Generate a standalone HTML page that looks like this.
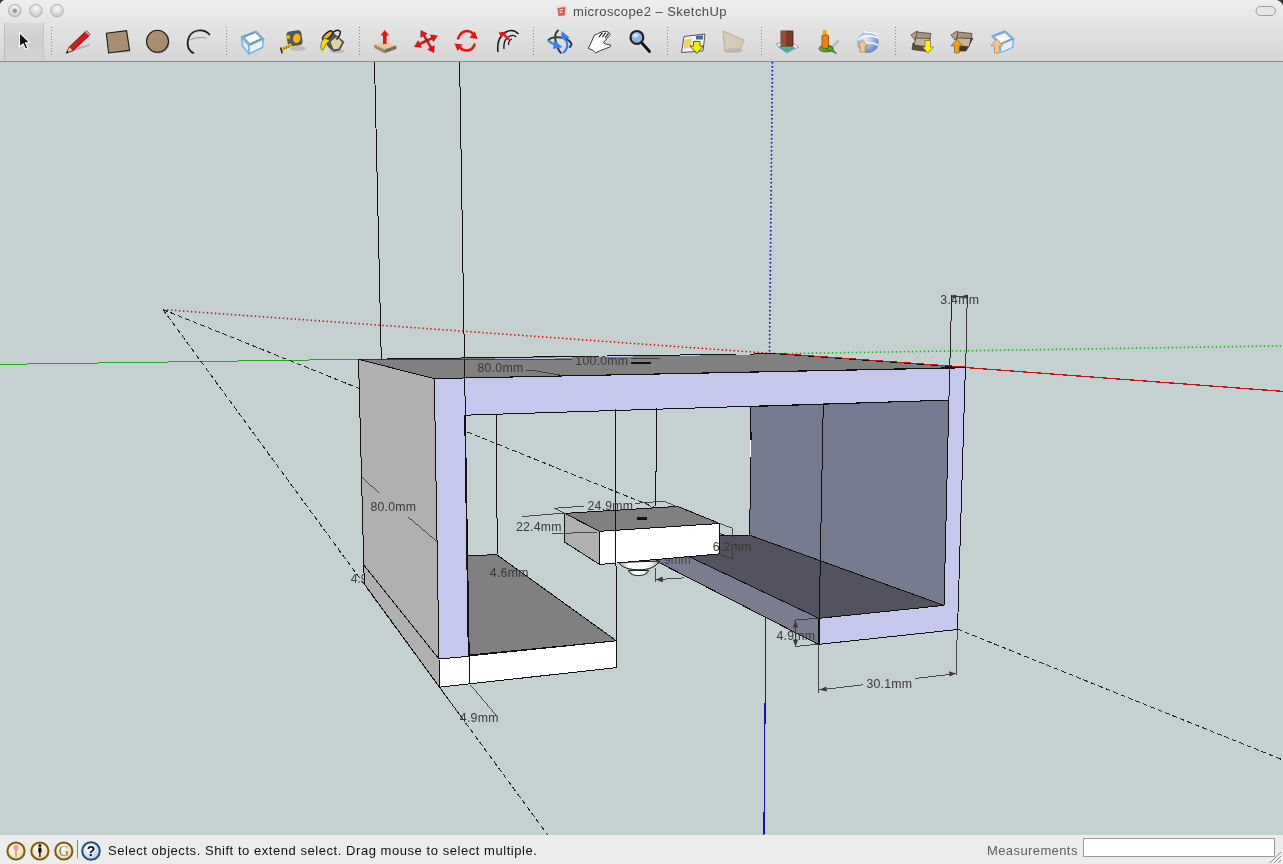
<!DOCTYPE html>
<html><head><meta charset="utf-8">
<style>
html,body{margin:0;padding:0;width:1283px;height:864px;overflow:hidden;background:#c5d0d1;font-family:"Liberation Sans",sans-serif;}
#top{position:absolute;left:0;top:0;width:1283px;height:61px;background:linear-gradient(#eeeeee,#e4e4e4 40%,#d5d5d5);border-bottom:1px solid #8e8e8e;will-change:transform;}
#status{position:absolute;left:0;top:835px;width:1283px;height:29px;background:#ececec;will-change:transform;}
#title{position:absolute;left:573px;top:4px;font-size:13px;letter-spacing:0.43px;color:#4b4b4b;white-space:nowrap;}
#vp{position:absolute;left:0;top:0;will-change:transform;}
.st{position:absolute;font-size:13px;color:#111;white-space:nowrap;letter-spacing:0.55px;}
</style></head><body>
<svg id="vp" width="1283" height="864" viewBox="0 0 1283 864" shape-rendering="crispEdges">
<defs>
 <linearGradient id="cyl" x1="0" y1="0" x2="1" y2="0"><stop offset="0" stop-color="#9a9a9a"/><stop offset="0.25" stop-color="#ffffff"/><stop offset="0.75" stop-color="#ffffff"/><stop offset="1" stop-color="#9a9a9a"/></linearGradient>
</defs>
<g id="axes" fill="none">
 <line x1="0" y1="364.4" x2="358.5" y2="359.3" stroke="#1faa1f" stroke-width="1"/>
 <line x1="163" y1="309.6" x2="775.8" y2="353.7" stroke="#d01010" stroke-width="1.6" stroke-dasharray="1.4 2.6" shape-rendering="auto"/>
 <line x1="775.8" y1="353.7" x2="1283" y2="345.9" stroke="#20b020" stroke-width="1.6" stroke-dasharray="1.4 2.6" shape-rendering="auto"/>
 <line x1="772.4" y1="62" x2="769.5" y2="353.7" stroke="#0000c8" stroke-width="1.6" stroke-dasharray="1.4 2.6" shape-rendering="auto"/>
 <line x1="965.4" y1="367.5" x2="1283" y2="391.4" stroke="#c01818" stroke-width="1.3"/>
 <line x1="765.9" y1="618" x2="763.9" y2="835" stroke="#1010c8" stroke-width="1.2"/>
</g>
<g id="guides" fill="none" stroke="#222" stroke-width="1">
 <line x1="163" y1="309.6" x2="547.7" y2="835" stroke-dasharray="5 3"/>
 <line x1="163" y1="309.6" x2="1283" y2="760" stroke-dasharray="5 3"/>
</g>
<g font-family="Liberation Sans" font-size="12" fill="#454545">
 <text x="350.8" y="582.6">4.9mm</text>
</g>
<g id="faces" stroke="#111" stroke-width="1" stroke-linejoin="round">
 <polygon points="750.1,406.6 948.9,400.1 944,605.4 750,535.6" fill="#767b90"/>
 <polygon points="656,535.8 749,535 944,605.4 819,618.3 656,541" fill="#52535f"/>
 <polygon points="656,541 819,618.3 818.5,644.5 656,561" fill="#7b7c90"/>
 <polygon points="467.6,556 496.5,554.5 616.4,640.8 467.6,655.2" fill="#808080"/>
 <polygon points="439,659 616.4,640.8 616.4,667.6 439.5,687.2" fill="#ffffff"/>
 <polygon points="358.5,359.4 434.3,378.6 439,659 363.8,565" fill="#b0b0b0"/>
 <polygon points="363.8,565 439,659 439.5,687.2 364.3,584" fill="#b0b0b0"/>
 <polygon points="358.5,359.4 775.8,353.7 965.4,367.5 434.3,378.6" fill="#808080"/>
 <path d="M434.3,378.6 L965.4,367.8 L957.5,629.5 L819,644.3 L819,618.3 L944,605.4 L948.9,400.1 L464.7,415.2 L468.3,656.3 L439,659 Z" fill="#c5c8ec"/>
</g>
<g id="zfight" stroke="#c5c8ec" stroke-width="1">
 <line x1="495" y1="359" x2="531" y2="358.6"/>
 <line x1="531" y1="358.3" x2="572" y2="357.8"/>
 <line x1="599" y1="356.9" x2="633" y2="356.5"/>
 <line x1="680" y1="356" x2="700" y2="355.7"/>
 <line x1="736" y1="355" x2="750" y2="354.8"/>
</g>
<line x1="775.8" y1="353.2" x2="965.4" y2="367" stroke="#c01818" stroke-width="1"/>
<g id="edges" fill="none" stroke="#111" stroke-width="1">
 <line x1="374.5" y1="62" x2="381.3" y2="359"/>
 <line x1="459.6" y1="62" x2="469.7" y2="684"/>
 <line x1="496.5" y1="415" x2="497.2" y2="554.5"/>
 <line x1="656.6" y1="408.5" x2="655.7" y2="506.5"/>
 <line x1="823.3" y1="403.3" x2="819.2" y2="618.3"/>
 <line x1="951.7" y1="295.4" x2="948.9" y2="400.1" stroke="#222"/>
 <line x1="967.3" y1="294.9" x2="965.7" y2="367.5" stroke="#333"/>
</g>
<rect x="749.5" y="432" width="2" height="8" fill="#111"/>
<rect x="750" y="440" width="1.2" height="16.5" fill="#fff"/>
<g font-family="Liberation Sans" font-size="12" fill="#454545">
 <text x="654" y="564.3">3.9mm</text>
</g>
<g id="box" stroke="#111" stroke-width="1" stroke-linejoin="round">
 <path shape-rendering="auto" d="M628.4,570.4 C629.5,574 634,575.6 638.5,575.6 C643,575.6 647.5,574 648.6,570.4 Z" fill="url(#cyl)"/>
 <path shape-rendering="auto" d="M619,562.5 C621,567.5 630,569.8 639,569.8 C648,569.8 657,567 659,561 Z" fill="url(#cyl)"/>
 <polygon points="564.8,513.4 599.6,531.3 599.6,564.5 564.8,542.2" fill="#b0b0b0"/>
 <polygon points="564.8,513.4 677.8,506.4 719.6,523.5 599.6,531.3" fill="#808080"/>
 <polygon points="599.6,531.3 719.6,523.5 719.6,553.9 599.6,564.5" fill="#ffffff"/>
 <rect x="637.3" y="517.3" width="9.3" height="2.7" fill="#111" stroke="none"/>
 <line x1="615.4" y1="409.5" x2="616.4" y2="667.6" stroke-width="1"/>
</g>
<g id="dims" fill="none" stroke="#3a3a3a" stroke-width="0.9">
 <line x1="361.8" y1="477.2" x2="379.1" y2="493"/>
 <line x1="408.1" y1="517" x2="436.6" y2="541.2"/>
 <line x1="521.7" y1="516.6" x2="564.5" y2="513.1"/>
 <line x1="555.2" y1="508.5" x2="564.5" y2="513.1"/>
 <line x1="551.7" y1="533.7" x2="596.9" y2="532.2"/>
 <line x1="554" y1="508.3" x2="583.6" y2="506.2"/>
 <polyline points="635.2,503.4 664.2,501.2 677.3,506.8"/>
 <line x1="646.4" y1="504" x2="652" y2="507.3"/>
 <polyline points="719.5,523.9 732.6,528.6 732.6,536.5"/>
 <polyline points="719.5,554.8 732.6,559.4 732.6,552.4"/>
 <line x1="655.4" y1="568.3" x2="655.4" y2="582.4"/>
 <line x1="655.4" y1="579.7" x2="684" y2="577.9"/>
 <polyline points="794,620.2 819,618"/>
 <polyline points="795,646.6 819,644"/>
 <line x1="795.5" y1="621" x2="795.5" y2="646"/>
 <line x1="818.6" y1="644.5" x2="818.6" y2="692.6"/>
 <line x1="957.2" y1="629.5" x2="956.3" y2="675.4"/>
 <line x1="819" y1="690" x2="862.9" y2="684.8"/>
 <line x1="915.2" y1="678.5" x2="955.5" y2="673.7"/>
 <line x1="470.5" y1="685" x2="495.6" y2="714.6"/>
 <line x1="439.5" y1="687.2" x2="461.5" y2="717.2" stroke="#111"/>
 <line x1="526.3" y1="370.2" x2="533.7" y2="370.5"/>
 <line x1="533.7" y1="370.5" x2="561.8" y2="375.4"/>
 <line x1="362" y1="359.8" x2="572.2" y2="359.1"/>
 <line x1="630.7" y1="359" x2="660" y2="358.3"/>
 <line x1="630.7" y1="363" x2="650.7" y2="363" stroke-width="1.6" stroke="#111"/>
 <line x1="952" y1="296.5" x2="967" y2="296.5" stroke-width="1"/>
</g>
<g id="dimarrows" fill="#3a3a3a" shape-rendering="auto">
 <polygon points="819.3,689.8 826.3,686.4 826.9,691.6"/>
 <polygon points="956,673.6 949,671.2 949.6,676.4"/>
 <polygon points="795.5,620.3 792.8,627.5 798.2,627.5"/>
 <polygon points="795.5,646.8 792.8,639.6 798.2,639.6"/>
 <polygon points="655.8,579.7 662.5,576.6 662.9,582.2"/>
 <polygon points="958.5,296.5 952.5,294.5 952.5,298.5"/>
 <polygon points="961,296.5 967,294.5 967,298.5"/>
</g>
<g id="labels" font-family="Liberation Sans" font-size="12.3" fill="#383838" letter-spacing="0.25">
 <text x="370.4" y="510.7">80.0mm</text>
 <text x="489.8" y="576.8">4.6mm</text>
 <text x="515.9" y="531.1">22.4mm</text>
 <text x="587.4" y="510.4">24.9mm</text>
 <text x="712.8" y="550.5">6.2mm</text>
 <text x="776.5" y="640.3">4.9mm</text>
 <text x="866.4" y="688.3">30.1mm</text>
 <text x="459.8" y="721.5">4.9mm</text>
 <text x="940.3" y="303.8">3.4mm</text>
 <text x="477.5" y="371.7">80.0mm</text>
 <text x="575.3" y="364.7">100.0mm</text>
</g>
</svg>
<div id="top">
<div id="title">microscope2 – SketchUp</div>
<svg id="tb" width="1283" height="62" viewBox="0 0 1283 62" style="position:absolute;left:0;top:0">
<defs>
 <radialGradient id="tl" cx="50%" cy="35%" r="60%"><stop offset="0" stop-color="#fafafa"/><stop offset="1" stop-color="#c9c9c9"/></radialGradient>
 <linearGradient id="selb" x1="0" y1="0" x2="0" y2="1"><stop offset="0" stop-color="#d9d9d9"/><stop offset="0.5" stop-color="#cdcdcd"/><stop offset="1" stop-color="#d4d4d4"/></linearGradient>
 <radialGradient id="globe" cx="40%" cy="35%" r="65%"><stop offset="0" stop-color="#e8eefa"/><stop offset="1" stop-color="#6d86c4"/></radialGradient>
</defs>
<path d="M0,0 L4,0 Q1,1 0,4 Z" fill="#333"/>
<path d="M1283,0 L1277,0 Q1282,1.5 1283,6 Z" fill="#333"/>
<!-- traffic lights -->
<circle cx="14.8" cy="10.6" r="6.3" fill="url(#tl)" stroke="#a9a9a9" stroke-width="0.8"/>
<circle cx="14.8" cy="10.8" r="2.2" fill="#9a9a9a"/>
<circle cx="35.9" cy="10.6" r="6.3" fill="url(#tl)" stroke="#a9a9a9" stroke-width="0.8"/>
<circle cx="57" cy="10.6" r="6.3" fill="url(#tl)" stroke="#a9a9a9" stroke-width="0.8"/>
<!-- zoom pill right -->
<rect x="1256" y="6.5" width="19.5" height="9" rx="4.5" fill="#e6e6e6" stroke="#8a8a8a" stroke-width="0.8"/>
<!-- title icon -->
<rect x="556" y="5.5" width="11" height="11.5" fill="#e4e4e4"/>
<path d="M557.5,8 L565.5,7 L564.5,15.5 L558.5,16 Z" fill="#d9574f"/>
<path d="M559.5,10 L563,9.7 M559.5,12.5 L562.5,12.2" stroke="#fff" stroke-width="1"/>
<!-- selected tool button -->
<rect x="4.5" y="23" width="39" height="37.5" fill="url(#selb)"/>
<line x1="4.5" y1="23" x2="4.5" y2="60.5" stroke="#bcbcbc"/>
<line x1="43.5" y1="23" x2="43.5" y2="60.5" stroke="#c4c4c4"/>
<path d="M19.5,32.5 L19.5,47 L23,43.8 L25.6,49.3 L28,48.2 L25.4,42.8 L29.8,42.6 Z" fill="#111" stroke="#fff" stroke-width="1.1" stroke-linejoin="round"/>
<!-- separators -->
<g stroke="#8a8a8a" stroke-width="1" stroke-dasharray="1.2 1.8" shape-rendering="crispEdges">
<line x1="51.5" y1="26.5" x2="51.5" y2="57"/>
<line x1="226" y1="26.5" x2="226" y2="57"/>
<line x1="359.5" y1="26.5" x2="359.5" y2="57"/>
<line x1="533.5" y1="26.5" x2="533.5" y2="57"/>
<line x1="667.5" y1="26.5" x2="667.5" y2="57"/>
<line x1="761.5" y1="26.5" x2="761.5" y2="57"/>
<line x1="895.5" y1="26.5" x2="895.5" y2="57"/>
</g>
<!-- pencil -->
<path d="M68,51 L87,34" stroke="#9a9a9a" stroke-width="1.5" opacity="0.0"/>
<path d="M70,51.5 L89,45" stroke="#a0a0a0" stroke-width="1.6" stroke-linecap="round" opacity="0.8"/>
<path d="M66.2,53.2 L69.5,46.8 L84.8,32.2 L88.8,36 L73.2,50.5 Z" fill="#e01515" stroke="#3a0000" stroke-width="0.7"/>
<path d="M66.2,53.2 L69.5,46.8 L72.8,50.4 Z" fill="#e8d59a" stroke="#333" stroke-width="0.6"/>
<path d="M66.2,53.2 L67.4,50.8 L68.6,52.1 Z" fill="#111"/>
<path d="M84.8,32.2 L86.6,30.5 L90.4,34.3 L88.8,36 Z" fill="#f080b0" stroke="#555" stroke-width="0.6"/>
<!-- rectangle -->
<path d="M108.2,52.5 L130,51.3" stroke="#9a9a9a" stroke-width="1.5" opacity="0.7"/>
<polygon points="106.3,33.3 126.6,30.7 129.6,50.3 108.6,53" fill="#a88e6e" stroke="#1b1b1b" stroke-width="1.1"/>
<!-- circle -->
<circle cx="158.5" cy="42.5" r="11.2" fill="#9a9a9a" opacity="0.5"/>
<circle cx="157.5" cy="41.3" r="11" fill="#a88e6e" stroke="#1b1b1b" stroke-width="1.1"/>
<!-- arc -->
<path d="M209.5,34.5 C204,28.5 193,29 189,37 C186,44 188,50.5 193.3,53" fill="none" stroke="#1b1b1b" stroke-width="1.7" stroke-linecap="round"/>
<path d="M190,40 C194,37.5 200,37 206.5,38" fill="none" stroke="#888" stroke-width="0.8"/>
<!-- make component -->
<g stroke-linejoin="round">
<polygon points="241.5,37 256,31.3 263.5,39 249,45.5" fill="#f4f4f4" stroke="#66b0f0" stroke-width="1.6"/>
<polygon points="241.5,37 249,45.5 249,53.8 242.5,46" fill="#e8e8e8" stroke="#66b0f0" stroke-width="1.4"/>
<polygon points="249,45.5 263.5,39 262.5,47.5 249,53.8" fill="#f0f0f0" stroke="#66b0f0" stroke-width="1.4"/>
<polygon points="243.8,37 255.5,32.6 261.3,38.6 249.6,43.8" fill="#fafafa" stroke="#555" stroke-width="0.8"/>
</g>
<!-- tape measure -->
<ellipse cx="298" cy="48.5" rx="8" ry="2.6" fill="#9a9a9a" opacity="0.45"/>
<rect x="287" y="30.8" width="15" height="15" rx="3.5" fill="#565656" transform="rotate(-8 294.5 38.3)"/>
<circle cx="288.3" cy="37" r="2.1" fill="#f2b400"/>
<ellipse cx="296.8" cy="38.3" rx="3.7" ry="4.8" fill="#f6b800" transform="rotate(15 296.8 38.3)"/>
<path d="M281,49.6 L291.5,44.8" stroke="#f2c000" stroke-width="3.2"/>
<path d="M283.5,50 L284.5,47.5 M286,49 L287,46.4 M288.5,47.8 L289.5,45.3" stroke="#333" stroke-width="0.7"/>
<path d="M280.6,47.5 L282.2,53.4" stroke="#222" stroke-width="1.5"/>
<!-- paint bucket -->
<ellipse cx="337" cy="51" rx="7.5" ry="2.2" fill="#9a9a9a" opacity="0.45"/>
<polygon points="323.5,39 331.5,31.5 344,42 339.5,50 334,51.2 329,47.5" fill="#565656" stroke="#2a2a2a" stroke-width="0.6"/>
<polygon points="330.5,41.8 337,36.8 342,42.5 338.5,48.8 333.5,49.3" fill="#dcd3a6"/>
<ellipse cx="327.6" cy="35.5" rx="6.2" ry="2.6" fill="#f0b000" stroke="#1a1a1a" stroke-width="1.4" transform="rotate(-42 327.6 35.5)"/>
<path d="M333,32.5 Q337.5,28.5 340.3,31.5 Q340.5,35.5 336.5,39.5" fill="none" stroke="#111" stroke-width="1.3"/>
<path d="M324.5,38 Q320,42.5 320.8,48 Q321.8,51.5 323.4,49.5 Q324.5,44.5 330,40.5 Z" fill="#f2e000" stroke="#333" stroke-width="0.6"/>
<ellipse cx="322.6" cy="52.3" rx="0.9" ry="1.1" fill="#f2e000"/>
<!-- push pull -->
<polygon points="374,44.5 386,41.8 396.3,45.5 384.5,49.5" fill="#e2cba0"/>
<polygon points="374,44.5 384.5,49.5 384.5,53.2 374.5,48" fill="#9e8a64"/>
<polygon points="384.5,49.5 396.3,45.5 396.3,49 384.5,53.2" fill="#7c6b4e"/>
<path d="M383,44 L383,35.5 L380.5,35.5 L384.7,30 L389,35.5 L386.5,35.5 L386.5,44 Z" fill="#ee1010"/>
<!-- move -->
<g fill="#ee1010" stroke="#7a0000" stroke-width="0.4">
<polygon points="420.9,30.4 427.2,33.6 420.7,37.5"/>
<polygon points="427.8,40.0 424.8,35.0 423.1,36.1 426.0,41.0"/>
<polygon points="437.3,35.8 433.4,41.7 430.3,34.8"/>
<polygon points="427.3,41.4 432.2,39.2 431.4,37.4 426.5,39.6"/>
<polygon points="414.4,46.7 418.1,40.6 421.5,47.4"/>
<polygon points="426.5,39.6 419.3,43.1 420.2,44.9 427.3,41.4"/>
<polygon points="434.0,52.7 427.7,49.4 434.3,45.6"/>
<polygon points="426.0,41.0 430.1,48.0 431.8,47.0 427.8,40.0"/>
</g>
<!-- rotate -->
<path d="M458,38.5 Q461,31 467,31 Q471,31 473,34" fill="none" stroke="#ee1010" stroke-width="2.4" stroke-linecap="round"/>
<polygon points="474.6,31.2 477.6,39.1 469.5,37.7" fill="#ee1010"/>
<path d="M474.5,44.5 Q472.5,50.5 466.5,50.5 Q462,50.5 460,47.5" fill="none" stroke="#ee1010" stroke-width="2.4" stroke-linecap="round"/>
<polygon points="454.5,43.5 462.6,44.5 457.5,51.1" fill="#ee1010"/>
<!-- offset -->
<path d="M498,52 Q496,38 506,32 Q513,28 518.5,34" fill="none" stroke="#111" stroke-width="1.5"/>
<path d="M504,49 Q503,39 510,36 Q514,34.5 516,37" fill="none" stroke="#111" stroke-width="1.3"/>
<path d="M508.5,45 Q508.5,40 512,39" fill="none" stroke="#111" stroke-width="1.2"/>
<path d="M498.5,32.5 L506,31.5 L504.5,33.5 L510,39 L508.2,40.5 L503,35.2 L501.5,37.5 Z" fill="#ee1010"/>
<!-- orbit -->
<g fill="none" stroke-linecap="round">
<path d="M548.5,40 Q552,36.5 560.8,37.5 Q569,38.5 571.5,44 Q571,46 570,47" stroke="#3a3a3a" stroke-width="2"/>
<path d="M558,30.5 Q554.5,34 555.2,38.5 Q556.5,48 560.8,52.9" stroke="#3a3a3a" stroke-width="2"/>
<path d="M563.6,52.4 Q568.5,48 567,43 Q566,39.5 563,37.5" stroke="#2f80f0" stroke-width="2.2"/>
<path d="M548.5,40.6 Q550.5,43 555.2,44.5" stroke="#2f80f0" stroke-width="2.2"/>
</g>
<polygon points="561.4,31 569.8,37.8 561.4,38.9" fill="#2f80f0"/>
<polygon points="553,49 554.1,40 562.5,47.3" fill="#2f80f0"/>
<!-- pan hand -->
<path d="M588.3,48.4 L592.3,40 L594.5,35 L597.3,33.9 L602.4,31.6 L605.7,31.3 L608.5,32.2 L610.2,34.4 L606.9,38.3 L603.5,42.8 L605.7,44 L610.8,45.1 L610.2,46.8 L604.6,49 L600.1,50.7 L595.6,52.9 L592.8,50.1 Z" fill="#fcfcfc" stroke="#2a2a2a" stroke-width="0.9" stroke-linejoin="round"/>
<path d="M599,37.2 L602.4,32.7 M602.4,37.2 L605.7,32.7 M605.2,37.8 L608.5,33.3" stroke="#222" stroke-width="1.1"/>
<!-- zoom -->
<path d="M641.5,42.5 L649.5,51.5" stroke="#111" stroke-width="2.8" stroke-linecap="round"/>
<circle cx="636.9" cy="37.4" r="6.4" fill="#8eb6dc" stroke="#222" stroke-width="2.2"/>
<ellipse cx="635.5" cy="35.5" rx="3" ry="2" fill="#c9e0f4"/>
<!-- scenes -->
<polygon points="684,36.5 705,34 703,51 681.5,52.5" fill="#f2f2f2" stroke="#444" stroke-width="0.9"/>
<path d="M684,40 L692,38.5 L691,47 L684,49 Z" fill="#f0d070"/>
<rect x="696" y="35.5" width="7" height="4" fill="#3f6da8"/>
<path d="M693.5,41.5 L700,41.5 L700,46 L703.5,46 L696.8,53.5 L690,46 L693.5,46 Z" fill="#f6ee00" stroke="#333" stroke-width="0.8"/>
<!-- section/shadow -->
<path d="M723,31 L744,40 L739.5,51 L725,52 Z" fill="#d6cbb6" stroke="#b2a690" stroke-width="0.8"/>
<ellipse cx="734" cy="50.5" rx="9" ry="2.5" fill="#aaa" opacity="0.5"/>
<!-- building -->
<polygon points="776,44 788,40 799,47 786.5,53" fill="#f3f0e4" stroke="#888" stroke-width="0.7"/>
<polygon points="778,47 786.5,44 796,48 786.5,52.5" fill="#3da0d0"/>
<polygon points="781,47.5 786.5,45.5 793,47.5 786.5,50" fill="#5bb55a"/>
<rect x="781" y="31" width="12" height="15" fill="#7a3a28" stroke="#4a2010" stroke-width="0.8"/>
<rect x="781" y="31" width="5" height="15" fill="#9a4d34"/>
<!-- person -->
<path d="M829,51 L838.5,40.5" stroke="#a5a5a5" stroke-width="2.5" opacity="0.7"/>
<ellipse cx="826" cy="48.5" rx="7" ry="3.5" fill="#4caf2c" stroke="#1e5a10" stroke-width="0.7"/>
<path d="M826,49 L836.5,53.5 L830,46 Z" fill="#4caf2c" stroke="#1e5a10" stroke-width="0.7"/>
<rect x="822" y="34.8" width="6.5" height="13.5" rx="1.5" fill="#f08000" stroke="#7a3a00" stroke-width="0.7"/>
<circle cx="824.8" cy="32" r="2.3" fill="#f2b000"/>
<!-- globe -->
<circle cx="868" cy="42.2" r="10.7" fill="url(#globe)"/>
<path d="M858,40 Q866,33 878.5,38 M858.5,46 Q868,40 878,45 M864,32 Q872,32 877,35" fill="none" stroke="#fff" stroke-width="1.6" opacity="0.9"/>
<path d="M860,52 L860,46 L857.5,46 L862.6,40.5 L867.8,46 L865.2,46 L865.2,52 Z" fill="#f2c88c" stroke="#a98050" stroke-width="0.7"/>
<!-- get models -->
<g stroke="#333" stroke-width="0.7">
<polygon points="911,35 917,31 921,36 915,40" fill="#b5a183"/>
<polygon points="917,32 931,33.5 929,43 915,41" fill="#a89476"/>
<polygon points="913,43 929,45 927,51.5 912,49.5" fill="#5d4f3d"/>
<polygon points="916,38 930,38.5 928,47 914,45" fill="#c7b596"/>
</g>
<path d="M925,40.5 L930.5,40.5 L930.5,47 L933.5,47 L927.8,53.2 L922.5,47 L925,47 Z" fill="#fff200" stroke="#555" stroke-width="0.6"/>
<!-- share models -->
<g stroke="#333" stroke-width="0.7">
<polygon points="951,35 957,31 961,36 955,40" fill="#b5a183"/>
<polygon points="958,32 972,33.5 970,43 956,41" fill="#a89476"/>
<polygon points="961,43 973,38 966,51 958,51" fill="#3f3a30"/>
<polygon points="957,38 971,38.5 969,47 955,45" fill="#c7b596"/>
</g>
<path d="M954.5,53 L954.5,46 L951,46 L956.8,39 L962.5,46 L959.2,46 L959.2,53 Z" fill="#f7a000" stroke="#555" stroke-width="0.6"/>
<!-- share component -->
<g stroke-linejoin="round">
<polygon points="992,36 1005,31 1013.5,39 1000,45" fill="#f2f2f2" stroke="#66b0f0" stroke-width="1.5"/>
<polygon points="1000,45 1013.5,39 1012.5,47.5 1001,52.5" fill="#eeeeee" stroke="#66b0f0" stroke-width="1.3"/>
<polygon points="994,36.5 1005,32.5 1011.5,38.8 1000.5,43.5" fill="#fafafa" stroke="#666" stroke-width="0.7"/>
</g>
<path d="M994.5,53 L994.5,46 L991,46 L996.8,39 L1002.5,46 L999.2,46 L999.2,53 Z" fill="#f2c88c" stroke="#a98050" stroke-width="0.7"/>
</svg>
</div>
<div id="status">
<svg width="1283" height="29" viewBox="0 835 1283 29" style="position:absolute;left:0;top:0">
<defs>
 <radialGradient id="gold" cx="40%" cy="35%" r="65%"><stop offset="0" stop-color="#fffbe8"/><stop offset="1" stop-color="#e8dcb0"/></radialGradient>
 <radialGradient id="help" cx="40%" cy="30%" r="70%"><stop offset="0" stop-color="#ffffff"/><stop offset="1" stop-color="#b9cfe8"/></radialGradient>
</defs>
<circle cx="16" cy="851" r="8.6" fill="url(#gold)" stroke="#7a5a10" stroke-width="2"/>
<path d="M16,849.5 L16,857" stroke="#999" stroke-width="1.2"/>
<ellipse cx="16" cy="847.8" rx="2.6" ry="3.2" fill="#f4a0a0"/>
<circle cx="39.9" cy="851" r="8.6" fill="url(#gold)" stroke="#7a5a10" stroke-width="2"/>
<circle cx="39.9" cy="845.6" r="1.5" fill="#111"/>
<path d="M38.4,847.5 L41.4,847.5 L41.6,852.5 L40.6,852.5 L40.6,857 L39.2,857 L39.2,852.5 L38.2,852.5 Z" fill="#111"/>
<circle cx="63.8" cy="851" r="8.6" fill="url(#gold)" stroke="#7a5a10" stroke-width="2"/>
<text x="63.8" y="856.3" font-family="Liberation Serif" font-size="14" fill="#777" text-anchor="middle">G</text>
<line x1="77.5" y1="840" x2="77.5" y2="858.5" stroke="#888" stroke-width="1"/>
<circle cx="91" cy="851" r="8.8" fill="url(#help)" stroke="#1f4e7a" stroke-width="2"/>
<text x="91" y="856.3" font-family="Liberation Sans" font-weight="bold" font-size="14" fill="#111" text-anchor="middle">?</text>
<rect x="1083.5" y="838.5" width="191" height="18" fill="#fff" stroke="#9a9a9a" stroke-width="1"/>
<path d="M1270,863 L1281,852 M1274,863 L1281,856 M1278,863 L1281,860" stroke="#888" stroke-width="0.9"/>
</svg>
<div class="st" style="left:108px;top:8px;">Select objects. Shift to extend select. Drag mouse to select multiple.</div>
<div class="st" style="left:987px;top:8px;color:#5e5e5e;letter-spacing:0.4px;">Measurements</div>
</div>
</body></html>
